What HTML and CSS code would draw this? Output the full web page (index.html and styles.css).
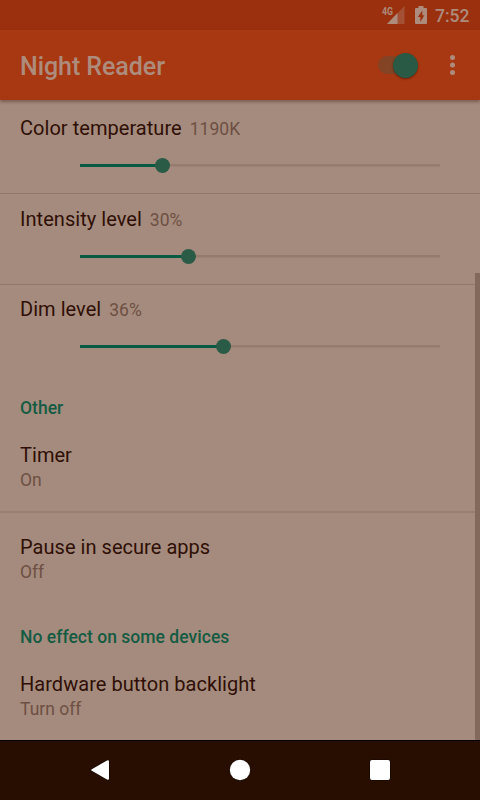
FILE: index.html
```html
<!DOCTYPE html>
<html lang="en">
<head>
<meta charset="utf-8">
<title>Night Reader</title>
<link rel="stylesheet" href="styles.css">
</head>
<body>
<div class="screen">
  <div class="status">
    <svg class="signal" width="25" height="20" viewBox="0 0 25 20">
      <path class="faint" d="M22.500 2V20H5z"/>
      <path class="glyph" d="M15.500 9V20H5z"/>
      <text class="network" x="0" y="10.500" textLength="11" lengthAdjust="spacingAndGlyphs">4G</text>
    </svg>
    <svg class="battery" width="12" height="18" viewBox="0 0 12 18">
      <path class="glyph" fill-rule="evenodd" d="M3.500 0h5v2H11q1 0 1 1v14q0 1-1 1H1q-1 0-1-1V3q0-1 1-1h2.500zM7.300 4.500L2.800 11H5.300V16L9.400 9.200H7.300z"/>
    </svg>
    <span class="clock">7:52</span>
  </div>
  <header class="appbar">
    <h1 class="title">Night Reader</h1>
    <div class="switch"><span class="knob"></span></div>
    <svg class="more" width="6" height="20" viewBox="0 0 6 20">
      <circle class="glyph" cx="2.500" cy="2.500" r="2.500"/><circle class="glyph" cx="2.500" cy="10" r="2.500"/><circle class="glyph" cx="2.500" cy="17.500" r="2.500"/>
    </svg>
  </header>
  <main class="content">
    <section class="setting color">
      <div class="label">Color temperature <span class="value">1190K</span></div>
      <div class="slider"><div class="fill" style="width:82.500px"></div><div class="thumb"></div></div>
    </section>
    <section class="setting">
      <div class="label">Intensity level <span class="value">30%</span></div>
      <div class="slider"><div class="fill" style="width:108px"></div><div class="thumb"></div></div>
    </section>
    <section class="setting dim">
      <div class="label">Dim level <span class="value">36%</span></div>
      <div class="slider"><div class="fill" style="width:143.500px"></div><div class="thumb"></div></div>
    </section>
    <h2 class="category">Other</h2>
    <section class="pref timer">
      <div class="name">Timer</div>
      <div class="summary">On</div>
    </section>
    <section class="pref pause">
      <div class="name">Pause in secure apps</div>
      <div class="summary">Off</div>
    </section>
    <h2 class="category second">No effect on some devices</h2>
    <section class="pref">
      <div class="name">Hardware button backlight</div>
      <div class="summary">Turn off</div>
    </section>
    <div class="scrollbar"></div>
  </main>
  <nav class="nav">
    <svg width="480" height="59" viewBox="0 0 480 59">
      <path class="key" d="M91.800 28.200L107 19.500Q109 18.500 109 20.500V37.500Q109 39.500 107 38.500L91.800 29.800Q90.500 29 91.800 28.200z"/>
      <circle class="key" cx="240" cy="29" r="10.200"/>
      <rect class="key" x="370" y="19" width="20" height="20" rx="2"/>
    </svg>
  </nav>
</div>
</body>
</html>
```
FILE: styles.css
```css
* { box-sizing: border-box; }
body { margin: 0; font-family: Roboto, "Liberation Sans", sans-serif; }
h1, h2 { margin: 0; font-weight: 500; }
svg { display: block; flex: none; }
.screen {
  width: 480px;
  height: 800px;
  overflow: hidden;
  display: flex;
  flex-direction: column;
  background: #a58b7d;
  color: #2f0f05;
}
.status {
  flex: none;
  height: 30px;
  display: flex;
  justify-content: flex-end;
  align-items: flex-start;
  padding-right: 10px;
  background: #9b300e;
}
.signal { margin: 4px 8px 0 0; }
.battery { margin-top: 6px; }
.glyph { fill: #ad8c7d; }
.faint { fill: #a45035; }
.network { font-size: 10px; font-weight: 700; fill: #ad8c7d; }
.clock {
  width: 35px;
  margin-left: 8px;
  font-size: 17.5px;
  font-weight: 500;
  line-height: 20px;
  margin-top: 6px;
  color: #ad8c7d;
}
.appbar {
  flex: none;
  height: 70px;
  display: flex;
  align-items: center;
  padding: 0 24px 0 20px;
  background: #a83811;
  position: relative;
  z-index: 1;
  box-shadow: 0 2px 3px rgba(60, 30, 20, .42);
}
.title { flex: 1; font-size: 25px; letter-spacing: -.06px; line-height: 30px; color: #ad8c7d; padding-top: 3px; }
.switch {
  width: 40px;
  height: 18px;
  margin-right: 32px;
  border-radius: 9px;
  background: #824424;
  display: flex;
  align-items: center;
  justify-content: flex-end;
}
.knob {
  width: 25px;
  height: 25px;
  border-radius: 50%;
  background: #295a45;
  box-shadow: 0 1px 2px rgba(50, 10, 0, .55);
}
.content { flex: 1; min-height: 0; position: relative; }
.setting {
  height: 91px;
  padding: 13px 0 0 20px;
  border-bottom: 1px solid #927668;
}
.color { height: 94px; padding-top: 16px; }
.dim { height: 91px; padding-top: 12px; border: 0; }
.label, .name { font-size: 20px; line-height: 24px; letter-spacing: .04px; }
.value { font-size: 17.5px; color: #6d5043; margin-left: 3px; }
.slider {
  position: relative;
  display: flex;
  align-items: center;
  height: 15px;
  width: 360px;
  margin: 17px 0 0 60px;
  background: linear-gradient(#967b6d, #967b6d) 0 50% / 100% 2.5px no-repeat;
}
.fill { height: 2.5px; background: #075b43; }
.thumb { flex: none; width: 15px; height: 15px; margin-left: -7.5px; border-radius: 50%; background: #295b46; }
.category { font-size: 17.5px; line-height: 20px; letter-spacing: .03px; color: #145b43; margin: 22px 20px 0; }
.pref { padding: 0 20px; }
.timer { height: 95px; padding-top: 25px; border-bottom: 2px solid #9a7f71; }
.category + .pref { padding-top: 25px; }
.pause { padding-top: 22px; }
.summary { font-size: 17.5px; line-height: 20px; color: #6d5043; margin-top: 3px; }
.second { margin-top: 45px; }
.scrollbar { position: absolute; right: 0; top: 173px; bottom: 0; width: 5px; background: #82695c; }
.nav { flex: none; height: 60px; background: #270e00; border-top: 1px solid #060100; }
.key { fill: #fff; stroke: #100500; stroke-width: 1; paint-order: stroke; }
```
